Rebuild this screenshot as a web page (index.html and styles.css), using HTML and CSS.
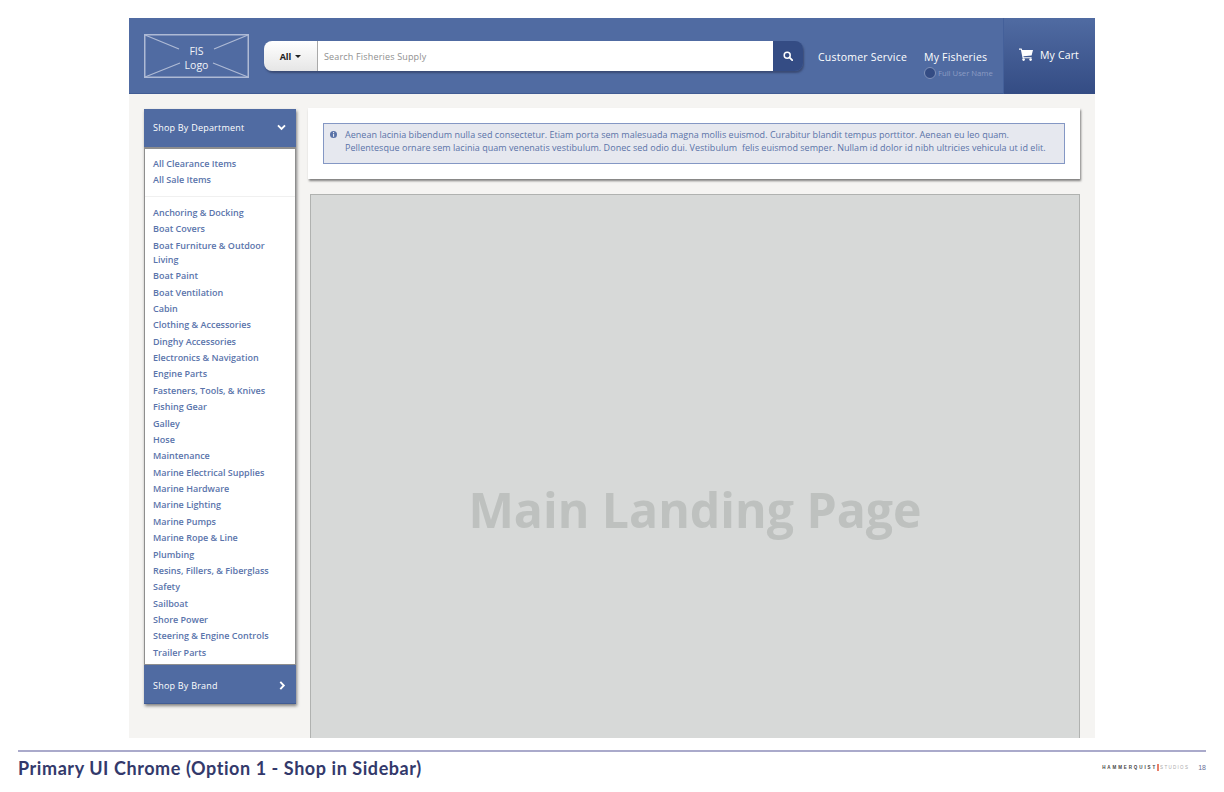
FILE: index.html
```html
<!DOCTYPE html>
<html lang="en">
<head>
    <meta charset="UTF-8">
    <meta name="viewport" content="width=device-width, initial-scale=1.0">
    <title>Primary UI Chrome</title>
    <link rel="stylesheet" href="styles.css">
</head>
<body>

    <div class="frame">
        <div class="header">
            <div class="logo">
                <svg class="logo-lines" width="105" height="44" viewBox="0 0 105 44">
                    <rect x="0.75" y="0.75" width="103.5" height="42.5" fill="none" stroke="#aebad5" stroke-width="1.5"/>
                    <path d="M1 1 L35 15 M104 1 L70 15 M1 43 L36 29 M104 43 L69 29" fill="none" stroke="#aebad5" stroke-width="1.3"/>
                </svg>
                <span class="logo-text">FIS<br>Logo</span>
            </div>

            <div class="search">
                <div class="search-all">All <span class="caret"></span></div>
                <div class="search-input">Search Fisheries Supply</div>
                <div class="search-btn">
                    <svg width="10" height="10" viewBox="0 0 10 10">
                        <circle cx="4.2" cy="4.2" r="3" fill="none" stroke="#fff" stroke-width="1.5"/>
                        <path d="M6.4 6.4 L9.2 9.2" stroke="#fff" stroke-width="1.8" stroke-linecap="round"/>
                    </svg>
                </div>
            </div>

            <a class="nav-link nav-service">Customer Service</a>
            <div class="nav-account">
                <a class="nav-link">My Fisheries</a>
                <div class="user">
                    <span class="avatar"></span>
                    <span class="user-name">Full User Name</span>
                </div>
            </div>

            <div class="cart">
                <svg width="14" height="13" viewBox="0 0 14 13">
                    <path d="M0 0.6 H2.6 L3.2 2 H14 L12.6 7.4 L4.4 8.2 L4.7 9.2 H12.6 V10.2 H3.6 L1.9 1.7 H0 Z" fill="#fff"/>
                    <circle cx="4.6" cy="11.6" r="1.3" fill="#fff"/>
                    <circle cx="11.6" cy="11.6" r="1.3" fill="#fff"/>
                </svg>
                <span>My Cart</span>
            </div>
        </div>

        <div class="content">
            <div class="sidebar">
                <div class="side-head side-head-dept">
                    <span>Shop By Department</span>
                    <svg width="9" height="7" viewBox="0 0 9 7">
                        <path d="M1 1.3 L4.5 4.8 L8 1.3" fill="none" stroke="#fff" stroke-width="1.9"/>
                    </svg>
                </div>
                <div class="side-list">
                    <ul class="side-group side-group-top">
                        <li>All Clearance Items</li>
                        <li>All Sale Items</li>
                    </ul>
                    <ul class="side-group">
                        <li>Anchoring &amp; Docking</li>
                        <li>Boat Covers</li>
                        <li>Boat Furniture &amp; Outdoor Living</li>
                        <li>Boat Paint</li>
                        <li>Boat Ventilation</li>
                        <li>Cabin</li>
                        <li>Clothing &amp; Accessories</li>
                        <li>Dinghy Accessories</li>
                        <li>Electronics &amp; Navigation</li>
                        <li>Engine Parts</li>
                        <li>Fasteners, Tools, &amp; Knives</li>
                        <li>Fishing Gear</li>
                        <li>Galley</li>
                        <li>Hose</li>
                        <li>Maintenance</li>
                        <li>Marine Electrical Supplies</li>
                        <li>Marine Hardware</li>
                        <li>Marine Lighting</li>
                        <li>Marine Pumps</li>
                        <li>Marine Rope &amp; Line</li>
                        <li>Plumbing</li>
                        <li>Resins, Fillers, &amp; Fiberglass</li>
                        <li>Safety</li>
                        <li>Sailboat</li>
                        <li>Shore Power</li>
                        <li>Steering &amp; Engine Controls</li>
                        <li>Trailer Parts</li>
                    </ul>
                </div>
                <div class="side-head side-head-brand">
                    <span>Shop By Brand</span>
                    <svg width="7" height="9" viewBox="0 0 7 9">
                        <path d="M1.3 0.8 L4.8 4.5 L1.3 8.2" fill="none" stroke="#fff" stroke-width="1.9"/>
                    </svg>
                </div>
            </div>

            <div class="main">
                <div class="notice-card">
                    <div class="alert">
                        <svg class="alert-icon" width="7" height="7" viewBox="0 0 7 7">
                            <circle cx="3.5" cy="3.5" r="3.5" fill="#5a73a8"/>
                            <rect x="3" y="1" width="1.1" height="1.1" fill="#e6e8ef"/>
                            <rect x="3" y="2.8" width="1.1" height="3" fill="#e6e8ef"/>
                        </svg>
                        <p>Aenean lacinia bibendum nulla sed consectetur. Etiam porta sem malesuada magna mollis euismod. Curabitur blandit tempus porttitor. Aenean eu leo quam.<br>Pellentesque ornare sem lacinia quam venenatis vestibulum. Donec sed odio dui. Vestibulum &nbsp;felis euismod semper. Nullam id dolor id nibh ultricies vehicula ut id elit.</p>
                    </div>
                </div>
                <div class="placeholder">Main Landing Page</div>
            </div>
        </div>
    </div>

    <div class="footer">
        <div class="footer-title">Primary UI Chrome (Option 1 - Shop in Sidebar)</div>
        <div class="footer-right">
            <span class="brand-a">HAMMERQUIST</span><span class="brand-b">STUDIOS</span>
            <span class="page-num">18</span>
        </div>
    </div>

</body>
</html>
```

FILE: styles.css
```css
body {
    margin: 0;
    padding: 18px 18px 0;
    background-color: #fff;
    font-family: "Open Sans", sans-serif;
    overflow: hidden;
}

ul {
    list-style: none;
    margin: 0;
    padding: 0;
}

.frame {
    width: 966px;
    height: 720px;
    margin-left: 111px;
    background-color: #f5f4f2;
    overflow: hidden;
}

/* header */
.header {
    height: 75px;
    display: flex;
    align-items: center;
    background-color: #506ba2;
    border-bottom: 1px solid #415c94;
    color: #fff;
}

.header > * {
    flex-shrink: 0;
}

.logo {
    position: relative;
    width: 105px;
    height: 44px;
    margin: 1px 0 0 15px;
    display: flex;
    align-items: center;
    justify-content: center;
}

.logo-lines {
    position: absolute;
    left: 0;
    top: 0;
}

.logo-text {
    position: relative;
    top: 2px;
    font-size: 10.5px;
    line-height: 14px;
    text-align: center;
    color: #f0f3f8;
}

.search {
    width: 539px;
    height: 30px;
    margin-left: 15px;
    display: flex;
    border-radius: 8px;
    box-shadow: 1px 2px 2px rgba(40, 50, 80, 0.55);
    overflow: hidden;
}

.search-all {
    width: 53px;
    padding-top: 1px;
    border-right: 1px solid #a9a9a9;
    background: linear-gradient(#ffffff, #e6e6e6);
    color: #222;
    font-size: 9px;
    font-weight: 700;
    display: flex;
    align-items: center;
    justify-content: center;
    gap: 4px;
}

.caret {
    width: 0;
    height: 0;
    border-left: 3px solid transparent;
    border-right: 3px solid transparent;
    border-top: 3px solid #222;
}

.search-input {
    flex: 1;
    background-color: #fff;
    color: #8f8f8f;
    font-size: 9px;
    letter-spacing: 0.17px;
    line-height: 32px;
    padding-left: 6px;
}

.search-btn {
    width: 30px;
    background-color: #344c84;
    display: flex;
    align-items: center;
    justify-content: center;
}

.nav-link {
    font-size: 10.5px;
    letter-spacing: 0.22px;
    color: #fff;
    white-space: nowrap;
}

.nav-service {
    width: 90px;
    margin-left: 15px;
    margin-top: 3px;
}

.nav-account {
    margin-left: 16px;
    margin-top: 11px;
    width: 79px;
}

.user {
    display: flex;
    align-items: center;
    height: 12px;
    margin-top: 1px;
}

.avatar {
    width: 12px;
    height: 12px;
    box-sizing: border-box;
    border-radius: 50%;
    background-color: #344c84;
    border: 1px solid #7f92ba;
}

.user-name {
    font-size: 7.7px;
    color: #8c9cc2;
    margin-left: 2px;
    white-space: nowrap;
}

.cart {
    width: 92px;
    height: 76px;
    box-sizing: border-box;
    margin-bottom: -1px;
    padding: 0 0 3px 15px;
    display: flex;
    align-items: center;
    gap: 7px;
    background: linear-gradient(#506ba2, #344c84);
    border-left: 1px solid #44609a;
    font-size: 10.5px;
    letter-spacing: 0.15px;
}

/* body of page */
.content {
    display: flex;
    align-items: flex-start;
    padding: 14px 15px 0 15px;
}

.sidebar {
    width: 152px;
    margin-top: 1px;
    box-shadow: 1px 2px 3px rgba(50, 50, 50, 0.6);
    flex-shrink: 0;
}

.side-head {
    display: flex;
    align-items: center;
    justify-content: space-between;
    padding: 0 10px 0 9px;
    background-color: #506ba2;
    color: #fff;
    font-size: 9px;
    letter-spacing: 0.22px;
}

.side-head-dept {
    height: 36px;
    padding-bottom: 2px;
    border-bottom: 2px solid #8e8e8e;
}

.side-head-brand {
    height: 36px;
    padding-top: 2px;
    border-top: 1px solid #8e8e8e;
    border-bottom: 1px solid #415c94;
}

.side-list {
    height: 515px;
    box-sizing: border-box;
    background-color: #fff;
    border-left: 1px solid #8e8e8e;
    border-right: 1px solid #8e8e8e;
    padding-top: 8px;
}

.side-group {
    padding: 0 8px;
    color: #5a74ab;
    font-size: 9px;
    font-weight: 600;
    line-height: 14px;
}

.side-group li {
    padding-bottom: 2.38px;
}

.side-group-top {
    padding-bottom: 6px;
    margin-bottom: 9.3px;
    border-bottom: 1px solid #f0f0f0;
}

.main {
    width: 772px;
    margin-left: 12px;
}

.notice-card {
    height: 71px;
    box-sizing: border-box;
    padding: 15px;
    background-color: #fff;
    box-shadow: 1px 2px 2px rgba(50, 50, 50, 0.6);
}

.alert {
    height: 41px;
    box-sizing: border-box;
    padding: 4px 10px 0 6px;
    display: flex;
    gap: 8px;
    background-color: #e6e8ef;
    border: 1px solid #8497c4;
    color: #5a73a8;
    font-size: 9px;
    letter-spacing: 0.03px;
    line-height: 13px;
}

.alert-icon {
    margin-top: 3px;
    flex-shrink: 0;
}

.alert p {
    margin: 0;
    white-space: nowrap;
}

.placeholder {
    width: 770px;
    height: 560px;
    box-sizing: border-box;
    margin: 15px 0 0 2px;
    padding-top: 278px;
    background-color: #d7d9d8;
    border: 1px solid #b0b2b0;
    color: #bec1bf;
    font-size: 48.2px;
    font-weight: 700;
    line-height: 72px;
    text-align: center;
}

/* slide footer */
.footer {
    width: 1188px;
    height: 33px;
    margin-top: 12px;
    box-sizing: border-box;
    border-top: 2px solid #aaaacb;
    display: flex;
    align-items: center;
    justify-content: space-between;
}

.footer-title {
    font-family: Lato, sans-serif;
    font-size: 18px;
    font-weight: 700;
    letter-spacing: 0.57px;
    color: #33396b;
}

.footer-right {
    display: flex;
    align-items: center;
    font-family: "Liberation Sans", sans-serif;
    font-size: 4.5px;
    line-height: 7px;
    letter-spacing: 1.3px;
}

.brand-a {
    color: #444;
    font-weight: 700;
    letter-spacing: 1.9px;
    border-right: 2px solid #e8806a;
}

.brand-b {
    color: #aaa;
    padding-left: 1px;
}

.page-num {
    margin-left: 9px;
    font-size: 7px;
    letter-spacing: 0;
    color: #6a6f99;
}
```
